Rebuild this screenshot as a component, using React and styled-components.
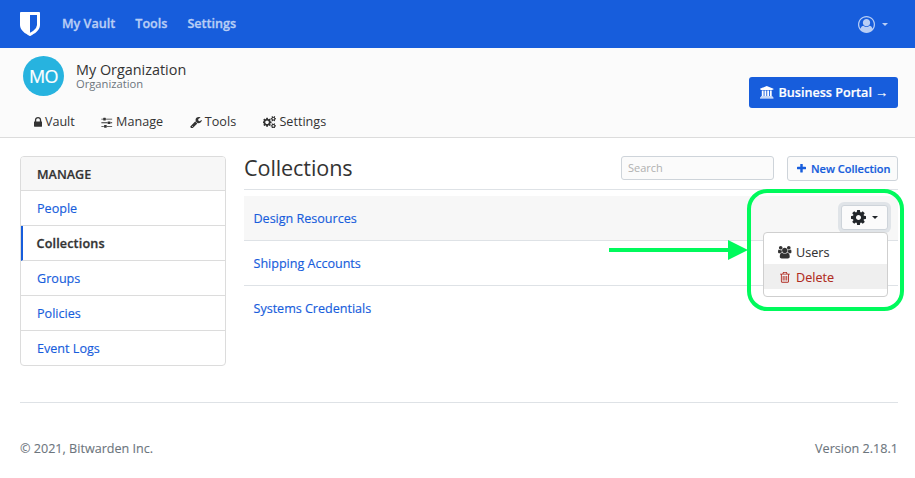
import React from "react";
import styled, { createGlobalStyle } from "styled-components";

const GlobalStyle = createGlobalStyle`
  *, *::before, *::after { box-sizing: border-box; }
  body {
    margin: 0;
    background: #fff;
    color: #333;
    font-family: "Open Sans", "Noto Sans", sans-serif;
    font-size: 12.6px;
    line-height: 18px;
    overflow: hidden;
  }
  a { color: inherit; text-decoration: none; }
`;

const smallGear =
  "q0 16-149 31-12 27-30 52 51 113 51 138 0 4-4 7-122 71-124 71-8 0-46-47t-52-68q-20 2-30 2t-30-2q-14 21-52 68t-46 47q-2 0-124-71-4-3-4-7 0-25 51-138-18-25-30-52-149-15-149-31v-140q0-16 149-31 13-29 30-52-51-113-51-138 0-4 4-7 4-2 35-20t59-34 30-16q8 0 46 46.5t52 67.5q20-2 30-2t30 2q51-71 92-112l6-2q4 0 124 70 4 3 4 7 0 25-51 138 17 23 30 52 149 15 149 31z";

const ICONS = {
  shield: { box: "256 128 1280 1536", d: "M1344 960v-640h-448v1137q119-63 213-137 235-184 235-360zm192-768v768q0 86-33.500 170.500t-83 150-118 127.500-126.500 103-121 77.500-89.500 49.500-42.500 20q-12 6-26 6t-26-6q-16-7-42.500-20t-89.500-49.500-121-77.500-126.500-103-118-127.500-83-150-33.500-170.500v-768q0-26 19-45t45-19h1152q26 0 45 19t19 45z" },
  lock: { box: "320 0 1152 1792", d: "M640 768h512v-192q0-106-75-181t-181-75-181 75-75 181v192zm832 96v576q0 40-28 68t-68 28h-960q-40 0-68-28t-28-68v-576q0-40 28-68t68-28h32v-192q0-184 132-316t316-132 316 132 132 316v192h32q40 0 68 28t28 68z" },
  sliders: { box: "128 0 1536 1792", d: "M480 1408v128h-352v-128h352zm352-128q26 0 45 19t19 45v256q0 26-19 45t-45 19h-256q-26 0-45-19t-19-45v-256q0-26 19-45t45-19h256zm160-384v128h-864v-128h864zm-640-512v128h-224v-128h224zm1312 1024v128h-736v-128h736zm-960-1152q26 0 45 19t19 45v256q0 26-19 45t-45 19h-256q-26 0-45-19t-19-45v-256q0-26 19-45t45-19h256zm640 512q26 0 45 19t19 45v256q0 26-19 45t-45 19h-256q-26 0-45-19t-19-45v-256q0-26 19-45t45-19h256zm320 128v128h-224v-128h224zm0-512v128h-864v-128h864z" },
  wrench: { box: "64 0 1664 1792", d: "M448 1472q0-26-19-45t-45-19-45 19-19 45 19 45 45 19 45-19 19-45zm644-420l-682 682q-37 37-90 37-52 0-91-37l-106-108q-38-36-38-90 0-53 38-91l681-681q39 98 114.500 173.500t173.500 114.500zm634-435q0 39-23 106-47 134-164.500 217.500t-258.500 83.500q-185 0-316.500-131.500t-131.500-316.500 131.500-316.500 316.500-131.500q58 0 121.500 16.500t107.500 46.500q16 11 16 28t-16 28l-293 169v224l193 107q5-3 79-48.500t135.500-81 70.500-35.500q15 0 23.500 10t8.500 25z" },
  cog: { box: "128 128 1536 1536", d: "M1152 896q0-106-75-181t-181-75-181 75-75 181 75 181 181 75 181-75 75-181zm512-109v222q0 12-8 23t-20 13l-185 28q-19 54-39 91 35 50 107 138 10 12 10 25t-9 23q-27 37-99 108t-94 71q-12 0-26-9l-138-108q-44 23-91 38-16 136-29 186-7 28-36 28h-222q-14 0-24.500-8.500t-11.500-21.500l-28-184q-49-16-90-37l-141 107q-10 9-25 9-14 0-25-11-126-114-165-168-7-10-7-23 0-12 8-23 15-21 51-66.500t54-70.500q-27-50-41-99l-183-27q-13-2-21-12.500t-8-23.500v-222q0-12 8-23t19-13l186-28q14-46 39-92-40-57-107-138-10-12-10-24 0-10 9-23 26-36 98.500-107.500t94.500-71.500q13 0 26 10l138 107q44-23 91-38 16-136 29-186 7-28 36-28h222q14 0 24.500 8.500t11.500 21.500l28 184q49 16 90 37l142-107q9-9 24-9 13 0 25 10 129 119 165 170 7 8 7 22 0 12-8 23-15 21-51 66.500t-54 70.500q26 50 41 98l183 28q13 2 21 12.500t8 23.500z" },
  cogs: { box: "0 0 1920 1792", d: "M832 896q0-106-75-181t-181-75-181 75-75 181 75 181 181 75 181-75 75-181zm768 512q0-52-38-90t-90-38-90 38-38 90q0 53 37.500 90.500t90.500 37.500 90.500-37.500 37.500-90.500zm0-1024q0-52-38-90t-90-38-90 38-38 90q0 53 37.500 90.500t90.500 37.500 90.500-37.500 37.500-90.500zm-384 421v185q0 10-7 19.500t-16 10.500l-155 24q-11 35-32 76 34 48 90 115 7 11 7 20 0 12-7 19-23 30-82.500 89.500t-78.500 59.500q-11 0-21-7l-115-90q-37 19-77 31-11 108-23 155-7 24-30 24h-186q-11 0-20-7.500t-10-17.500l-23-153q-34-10-75-31l-118 89q-7 7-20 7-11 0-21-8-144-133-144-160 0-9 7-19 10-14 41-53t47-61q-23-44-35-82l-152-24q-10-1-17-9.500t-7-19.500v-185q0-10 7-19.500t16-10.500l155-24q11-35 32-76-34-48-90-115-7-11-7-20 0-12 7-20 22-30 82-89t79-59q11 0 21 7l115 90q34-18 77-32 11-108 23-154 7-24 30-24h186q11 0 20 7.500t10 17.500l23 153q34 10 75 31l118-89q8-7 20-7 11 0 21 8 144 133 144 160 0 8-7 19-12 16-42 54t-45 60q23 48 34 82l152 23q10 2 17 10.500t7 19.500zm640 533v140" + smallGear + "m0-1024v140" + smallGear },
  bank: { box: "0 0 1920 1792", d: "M960 0l960 384v128h-128q0 26-20.500 45t-48.500 19h-1526q-28 0-48.500-19t-20.500-45h-128v-128zm-704 640h256v768h128v-768h256v768h128v-768h256v768h128v-768h256v768h59q28 0 48.500 19t20.500 45v64h-1664v-64q0-26 20.500-45t48.500-19h59v-768zm1595 960q28 0 48.500 19t20.500 45v128h-1920v-128q0-26 20.500-45t48.500-19h1782z" },
  users: { box: "0 0 1920 1792", d: "M593 896q-162 5-265 128h-134q-82 0-138-40.500t-56-118.500q0-353 124-353 6 0 43.500 21t97.500 42.500 119 21.500q67 0 133-23-5 37-5 66 0 139 81 256zm1071 637q0 120-73 189.500t-194 69.500h-874q-121 0-194-69.500t-73-189.500q0-53 3.500-103.500t14-109 26.500-108.500 43-97.500 62-81 85.500-53.500 111.500-20q10 0 43 21.500t73 48 107 48 135 21.500 135-21.500 107-48 73-48 43-21.500q61 0 111.500 20t85.500 53.500 62 81 43 97.500 26.500 108.500 14 109 3.500 103.500zm-1024-1277q0 106-75 181t-181 75-181-75-75-181 75-181 181-75 181 75 75 181zm704 384q0 159-112.500 271.500t-271.500 112.500-271.500-112.500-112.500-271.500 112.500-271.500 271.500-112.500 271.500 112.500 112.500 271.500zm576 225q0 78-56 118.500t-138 40.500h-134q-103-123-265-128 81-117 81-256 0-29-5-66 66 23 133 23 59 0 119-21.500t97.500-42.500 43.500-21q124 0 124 353zm-128-609q0 106-75 181t-181 75-181-75-75-181 75-181 181-75 181 75 75 181z" },
  trash: { box: "192 0 1408 1792", d: "M704 736v576q0 14-9 23t-23 9h-64q-14 0-23-9t-9-23v-576q0-14 9-23t23-9h64q14 0 23 9t9 23zm256 0v576q0 14-9 23t-23 9h-64q-14 0-23-9t-9-23v-576q0-14 9-23t23-9h64q14 0 23 9t9 23zm256 0v576q0 14-9 23t-23 9h-64q-14 0-23-9t-9-23v-576q0-14 9-23t23-9h64q14 0 23 9t9 23zm128 724v-948h-896v948q0 22 7 40.500t14.500 27 10.500 8.500h832q3 0 10.500-8.500t14.500-27 7-40.500zm-672-1076h448l-48-117q-7-9-17-11h-317q-10 2-17 11zm928 32v64q0 14-9 23t-23 9h-96v948q0 83-47 143.500t-113 60.500h-832q-66 0-113-58.500t-47-141.500v-952h-96q-14 0-23-9t-9-23v-64q0-14 9-23t23-9h309l70-167q15-37 54-63t79-26h320q40 0 79 26t54 63l70 167h309q14 0 23 9t9 23z" },
  plus: { box: "192 192 1408 1408", d: "M1600 736v192q0 40-28 68t-68 28h-416v416q0 40-28 68t-68 28h-192q-40 0-68-28t-28-68v-416h-416q-40 0-68-28t-28-68v-192q0-40 28-68t68-28h416v-416q0-40 28-68t68-28h192q40 0 68 28t28 68v416h416q40 0 68 28t28 68z" },
  user: { box: "0 0 1792 1792", d: "M896 0q182 0 348 71t286 191 191 286 71 348q0 181-70.500 347t-190.500 286-286 191.500-349 71.500-349-71-285.500-191.500-190.500-286-71-347.500 71-348 191-286 286-191 348-71zm619 1351q149-205 149-455 0-156-61-298t-164-245-245-164-298-61-298 61-245 164-164 245-61 298q0 250 149 455 66-327 306-327 131 128 313 128t313-128q240 0 306 327zm-235-647q0-159-112.500-271.500t-271.500-112.500-271.500 112.500-112.500 271.500 112.500 271.500 271.500 112.500 271.500-112.500 112.500-271.500z" },
};

const Glyph = styled.svg`
  display: block;
  flex: none;
  width: ${(p) => p.$w}px;
  height: ${(p) => p.$h}px;
  fill: currentColor;
`;

function Icon({ name, w, h }) {
  const icon = ICONS[name];
  return (
    <Glyph viewBox={icon.box} $w={w} $h={h} aria-hidden="true">
      <path d={icon.d} />
    </Glyph>
  );
}

const Caret = styled.span`
  border: 3px solid transparent;
  border-top-color: currentColor;
  border-bottom: 0;
`;

const Navbar = styled.nav`
  display: flex;
  align-items: center;
  height: 48px;
  padding: 0 27px 0 20px;
  background: #175ddc;
  color: #fff;
`;

const NavLinks = styled.div`
  display: flex;
  gap: 20px;
  margin-left: 22px;
  color: #b9cef5;
  font-weight: 600;
  -webkit-text-stroke: 0.3px currentColor;
`;

const Account = styled.div`
  display: flex;
  align-items: center;
  gap: 7px;
  margin-left: auto;
  color: #b9cef5;
`;

const OrgHeader = styled.header`
  display: flex;
  justify-content: space-between;
  height: 90px;
  padding: 0 17px 0 20px;
  background: #fbfbfb;
  border-bottom: 1px solid #dcdcdc;
`;

const OrgIdentity = styled.div`
  display: flex;
  height: 48px;
  padding: 8px 0 0 3px;
`;

const Avatar = styled.div`
  display: grid;
  place-items: center;
  width: 41px;
  height: 40px;
  padding-bottom: 1px;
  border-radius: 50%;
  background: #27b3df;
  color: #fff;
  font-size: 18px;
  letter-spacing: -0.6px;
  -webkit-text-stroke: 0.2px currentColor;
`;

const OrgText = styled.div`
  display: flex;
  flex-direction: column;
  padding: 5px 0 0 12px;
`;

const OrgName = styled.span`
  font-size: 14.4px;
  line-height: 17px;
`;

const OrgKind = styled.span`
  color: #6c757d;
  font-size: 11.2px;
  line-height: 12px;
`;

const Tabs = styled.div`
  display: flex;
  gap: 26.5px;
  padding: 17px 0 0 13.5px;
`;

const Tab = styled.a`
  display: flex;
  align-items: center;
  gap: 3.3px;
`;

const PortalButton = styled.a`
  display: flex;
  align-items: center;
  gap: 5px;
  width: 149px;
  height: 31px;
  margin-top: 29px;
  padding-left: 11px;
  border-radius: 3px;
  background: #175ddc;
  color: #fff;
  font-weight: 600;
  white-space: nowrap;
  -webkit-text-stroke: 0.2px currentColor;
`;

const PortalArrow = styled.span`
  margin-left: -2px;
  font-family: "Liberation Sans", sans-serif;
  font-size: 13px;
  font-weight: 400;
`;

const Content = styled.main`
  display: flex;
  gap: 18px;
  height: 264px;
  padding: 18px 17px 0 20px;
`;

const Sidebar = styled.aside`
  width: 206px;
  height: 210px;
  border: 1px solid #dcdcdc;
  border-radius: 4px;
`;

const SidebarTitle = styled.div`
  height: 34px;
  padding: 9px 16px 0;
  border-bottom: 1px solid #dcdcdc;
  border-radius: 3px 3px 0 0;
  background: #f7f7f7;
  font-weight: 600;
  -webkit-text-stroke: 0.2px currentColor;
`;

const SidebarItem = styled.a`
  display: block;
  height: 35px;
  padding: 9px 16px 0;
  border-bottom: 1px solid #dcdcdc;
  color: #175ddc;
  -webkit-text-stroke: 0.15px currentColor;
  &:last-child { border-bottom: 0; }
  ${(p) =>
    p.$active &&
    `
    padding-left: 13.5px;
    border-left: 2px solid #175ddc;
    color: #333;
    font-weight: 600;
    letter-spacing: 0.15px;
    -webkit-text-stroke: 0.3px currentColor;
  `}
`;

const Main = styled.section`
  flex: 1;
`;

const PageHead = styled.div`
  display: flex;
  height: 34px;
  border-bottom: 1px solid #dee2e6;
`;

const Title = styled.h1`
  margin: -3px auto 0 0;
  font-size: 21.6px;
  font-weight: 400;
  letter-spacing: -0.1px;
  line-height: 30px;
`;

const SearchInput = styled.input`
  width: 153px;
  height: 24px;
  margin-right: 13px;
  padding: 0 6px 1px;
  border: 1px solid #ced4da;
  border-radius: 3px;
  background: #fbfbfb;
  font: 11px "Open Sans", sans-serif;
  &::placeholder { color: #b0b0b0; opacity: 1; }
`;

const NewButton = styled.button`
  display: flex;
  align-items: center;
  gap: 5px;
  width: 111px;
  height: 25px;
  padding: 0 0 1px 9px;
  border: 1px solid #ced4da;
  border-radius: 3px;
  background: #fbfbfb;
  color: #175ddc;
  font: 600 11px "Open Sans", sans-serif;
  white-space: nowrap;
  -webkit-text-stroke: 0.2px currentColor;
`;

const List = styled.div`
  padding-top: 6px;
`;

const Row = styled.div`
  position: relative;
  display: flex;
  align-items: center;
  justify-content: space-between;
  height: 45px;
  padding: 0 10px 1px 9.5px;
  border-bottom: 1px solid ${(p) => (p.$last ? "transparent" : "#dee2e6")};
  background: ${(p) => (p.$hover ? "#f7f7f7" : "#fff")};
`;

const RowLink = styled.a`
  padding-top: 2px;
  color: #175ddc;
  letter-spacing: -0.03px;
  -webkit-text-stroke: 0.15px currentColor;
`;

const GearButton = styled.button`
  display: flex;
  align-items: center;
  gap: 6px;
  width: 47px;
  height: 25px;
  padding: 0 0 0 9px;
  border: 1px solid #ced4da;
  border-radius: 3px;
  background: #fbfbfb;
  box-shadow: 0 0 0 3px #e0e4e8;
  color: #212529;
`;

const Menu = styled.div`
  position: absolute;
  z-index: 1;
  top: 36px;
  right: 10px;
  width: 125px;
  height: 65px;
  padding-top: 6px;
  border: 1px solid #cfcfcf;
  border-radius: 4px;
  background: #fff;
`;

const MenuItem = styled.a`
  display: flex;
  align-items: center;
  gap: 4px;
  height: 25px;
  padding: 2px 0 0 14px;
  background: ${(p) => (p.$danger ? "#efefef" : "#fff")};
  color: ${(p) => (p.$danger ? "#b02a20" : "#333")};
  -webkit-text-stroke: 0.1px currentColor;
`;

const IconSlot = styled.span`
  display: grid;
  place-items: center;
  width: 14px;
`;

const Footer = styled.footer`
  display: flex;
  justify-content: space-between;
  margin: 0 17px 0 20px;
  padding-top: 37px;
  border-top: 1px solid #dee2e6;
  color: #6c757d;
  -webkit-text-stroke: 0.1px currentColor;
`;

const HighlightFrame = styled.div`
  position: absolute;
  z-index: 2;
  top: 189px;
  left: 747px;
  width: 157px;
  height: 122px;
  border: 4px solid #00fa5c;
  border-radius: 20px;
  pointer-events: none;
`;

const Arrow = styled.svg`
  position: absolute;
  z-index: 2;
  top: 240px;
  left: 609px;
  width: 139px;
  height: 20px;
  fill: #00fa5c;
`;

const sections = ["People", "Collections", "Groups", "Policies", "Event Logs"];
const collections = ["Design Resources", "Shipping Accounts", "Systems Credentials"];

export default function App() {
  return (
    <>
      <GlobalStyle />
      <Navbar>
        <Icon name="shield" w={20} h={24} />
        <NavLinks>
          <a>My Vault</a>
          <a>Tools</a>
          <a>Settings</a>
        </NavLinks>
        <Account>
          <Icon name="user" w={17} h={17} />
          <Caret />
        </Account>
      </Navbar>

      <OrgHeader>
        <div>
          <OrgIdentity>
            <Avatar>MO</Avatar>
            <OrgText>
              <OrgName>My Organization</OrgName>
              <OrgKind>Organization</OrgKind>
            </OrgText>
          </OrgIdentity>
          <Tabs>
            <Tab><Icon name="lock" w={8.1} h={12.6} />Vault</Tab>
            <Tab><Icon name="sliders" w={11.5} h={12.6} />Manage</Tab>
            <Tab><Icon name="wrench" w={12} h={12.6} />Tools</Tab>
            <Tab><Icon name="cogs" w={13.5} h={12.6} />Settings</Tab>
          </Tabs>
        </div>
        <PortalButton>
          <Icon name="bank" w={13.5} h={12.6} />
          <span>Business Portal</span>
          <PortalArrow>→</PortalArrow>
        </PortalButton>
      </OrgHeader>

      <Content>
        <Sidebar>
          <SidebarTitle>MANAGE</SidebarTitle>
          {sections.map((s) => (
            <SidebarItem key={s} $active={s === "Collections"}>{s}</SidebarItem>
          ))}
        </Sidebar>
        <Main>
          <PageHead>
            <Title>Collections</Title>
            <SearchInput placeholder="Search" />
            <NewButton><Icon name="plus" w={9} h={9} />New Collection</NewButton>
          </PageHead>
          <List>
            {collections.map((c, i) => (
              <Row key={c} $hover={i === 0} $last={i === 2}>
                <RowLink>{c}</RowLink>
                {i === 0 && (
                  <>
                    <GearButton aria-label="Options">
                      <Icon name="cog" w={15} h={15} />
                      <Caret />
                    </GearButton>
                    <Menu>
                      <MenuItem>
                        <IconSlot><Icon name="users" w={13.5} h={12.6} /></IconSlot>Users
                      </MenuItem>
                      <MenuItem $danger>
                        <IconSlot><Icon name="trash" w={9.9} h={12.6} /></IconSlot>Delete
                      </MenuItem>
                    </Menu>
                  </>
                )}
              </Row>
            ))}
          </List>
        </Main>
      </Content>

      <Footer>
        <span>© 2021, Bitwarden Inc.</span>
        <span>Version 2.18.1</span>
      </Footer>

      <HighlightFrame />
      <Arrow viewBox="0 0 139 20" aria-hidden="true">
        <path d="M0 8H119V0L139 10L119 20V12H0Z" />
      </Arrow>
    </>
  );
}
